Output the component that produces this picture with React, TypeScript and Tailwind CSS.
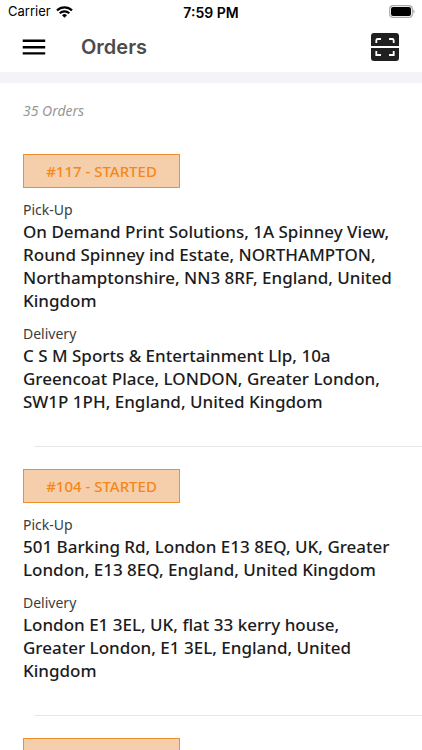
type Order = { id: string; pickUp: string; delivery: string };

const orders: Order[] = [
  {
    id: "#117",
    pickUp:
      "On Demand Print Solutions, 1A Spinney View, Round Spinney ind Estate, NORTHAMPTON, Northamptonshire, NN3 8RF, England, United Kingdom",
    delivery:
      "C S M Sports & Entertainment Llp, 10a Greencoat Place, LONDON, Greater London, SW1P 1PH, England, United Kingdom",
  },
  {
    id: "#104",
    pickUp: "501 Barking Rd, London E13 8EQ, UK, Greater London, E13 8EQ, England, United Kingdom",
    delivery: "London E1 3EL, UK, flat 33 kerry house, Greater London, E1 3EL, England, United Kingdom",
  },
];

const badge =
  "flex h-[34px] w-[157px] items-center justify-center border border-[#f08f2e] bg-[#f5cfab] text-[15px] font-medium text-[#f5871a]";

function StatusBar() {
  return (
    <div className="relative flex h-6 items-center justify-between pr-[7px] pl-2 font-['Inter',sans-serif] text-black">
      <div className="flex items-center gap-[5px] text-[13px]">
        <span>Carrier</span>
        <svg width="17" height="12" viewBox="0 0 17 12" fill="none" stroke="currentColor" strokeWidth="2.2" aria-hidden="true">
          <path d="M1 4.4a10.8 10.8 0 0 1 15 0" />
          <path d="M3.7 7.3a7 7 0 0 1 9.6 0" />
          <path d="M8.5 11.8 6 9.2a3.7 3.7 0 0 1 5 0Z" fill="currentColor" stroke="none" />
        </svg>
      </div>
      <span className="absolute inset-x-0 text-center text-[14px] font-semibold">7:59 PM</span>
      <svg width="27" height="14" viewBox="0 0 27 14" aria-hidden="true">
        <rect x="1.700" y="0.7" width="22.6" height="11.6" rx="3.4" fill="none" stroke="#a8a8a8" strokeWidth="1.2" />
        <rect x="3" y="2" width="20" height="9" rx="2" fill="#000" />
        <path d="M25.4 4.500v4c1.6-.6 1.6-3.400 0-4Z" fill="#a8a8a8" />
      </svg>
    </div>
  );
}

function Address({ label, text }: { label: string; text: string }) {
  return (
    <div>
      <h3 className="text-[14px] leading-[21px] text-[#3c3c3c]">{label}</h3>
      <p className="text-[17px] leading-[23px] font-medium text-[#1c1c1c]">{text}</p>
    </div>
  );
}

export default function App() {
  return (
    <div className="h-screen overflow-hidden bg-white font-['Noto_Sans',sans-serif]">
      <StatusBar />
      <header className="flex h-12 items-center px-[22px] pb-0.5">
        <button type="button" aria-label="Menu" className="w-6">
          <svg width="24" height="16" viewBox="0 0 24 16" stroke="#000" strokeWidth="2.4" aria-hidden="true">
            <path d="M.7 1.800h22.500M.7 8.200h22.500M.7 14.400h22.500" />
          </svg>
        </button>
        <h1 className="ml-[35px] flex-1 font-['Inter',sans-serif] text-[20px] font-semibold text-[#4b4b4d]">Orders</h1>
        <button type="button" aria-label="Scan">
          <svg width="30" height="30" viewBox="0 0 30 30" fill="none" aria-hidden="true">
            <path d="M1 14V4a3 3 0 0 1 3-3h22a3 3 0 0 1 3 3v10Z" fill="#202020" />
            <path d="M1 16v10a3 3 0 0 0 3 3h22a3 3 0 0 0 3-3V16Z" fill="#202020" />
            <path d="M6.300 11V8.500a1.500 1.500 0 0 1 1.500-1.500H11M19 7h3.200a1.500 1.500 0 0 1 1.500 1.500V11M6.300 19v4H11M23.700 19v4H19" stroke="#fff" strokeWidth="1.800" />
          </svg>
        </button>
      </header>
      <div className="h-[11px] bg-[#f3f3f8]" />
      <main>
        <p className="px-[23px] pt-[17px] pb-[33px] text-[14px] leading-[21px] text-[#979797] italic">35 Orders</p>
        {orders.map((order) => (
          <article key={order.id}>
            <div className="flex flex-col gap-[11px] px-[23px] pb-[33px]">
              <h2 className={badge}>{order.id} - STARTED</h2>
              <Address label="Pick-Up" text={order.pickUp} />
              <Address label="Delivery" text={order.delivery} />
            </div>
            <hr className="mb-[22px] ml-[34px] border-[#e6e6e6]" />
          </article>
        ))}
        <div className="px-[23px]">
          <div className={badge} />
        </div>
      </main>
    </div>
  );
}
